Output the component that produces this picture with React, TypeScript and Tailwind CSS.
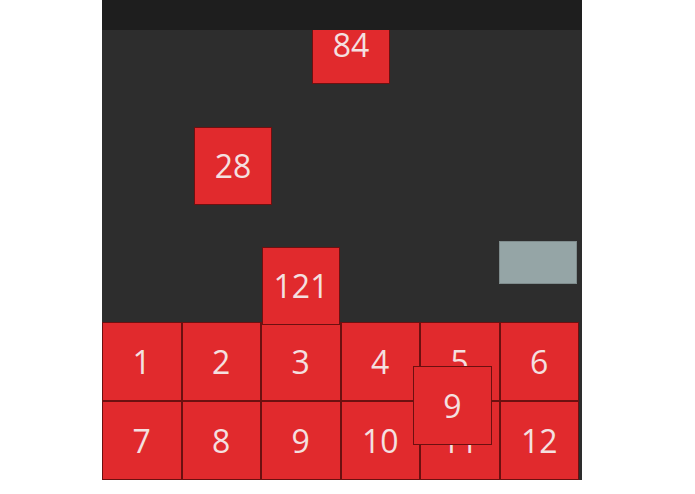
import React from 'react';

const font = { fontFamily: '"Open Sans", "Noto Sans", sans-serif' };

const grid = [1, 2, 3, 4, 5, 6, 7, 8, 9, 10, 11, 12];

// free tiles falling on the board: [value, left, top]
const falling: [number, number, number][] = [
  [84, 210, 6],
  [28, 92, 127],
  [121, 160, 247],
];

function Tile({ value, className }: { value: number; className: string }) {
  return (
    <div
      className={`flex items-center justify-center border border-[#6c1010] bg-[#e12a2d] text-[32px] leading-none text-[#f4e0e0] ${className}`}
    >
      {value}
    </div>
  );
}

export default function App() {
  return (
    <div className="h-[494px] w-[695px] bg-white" style={font}>
      <div className="relative ml-[102px] flex h-[480px] w-[480px] flex-col overflow-hidden bg-[#2d2d2d]">
        <div className="relative z-10 h-[30px] bg-[#1e1e1e]" />

        <div className="mt-auto grid h-[158px] w-[477px] grid-cols-6 grid-rows-2">
          {grid.map((n) => (
            <Tile key={n} value={n} className="h-full w-full" />
          ))}
        </div>

        {falling.map(([v, x, y]) => (
          <div key={v} className="absolute" style={{ left: x, top: y }}>
            <Tile value={v} className="h-[78px] w-[78px]" />
          </div>
        ))}

        <div className="absolute left-[311px] top-[366px]">
          <Tile value={9} className="h-[79px] w-[79px]" />
        </div>

        <div className="absolute left-[397px] top-[241px] h-[43px] w-[78px] border border-[#7f8c8d] bg-[#95a5a6]" />
      </div>
    </div>
  );
}
